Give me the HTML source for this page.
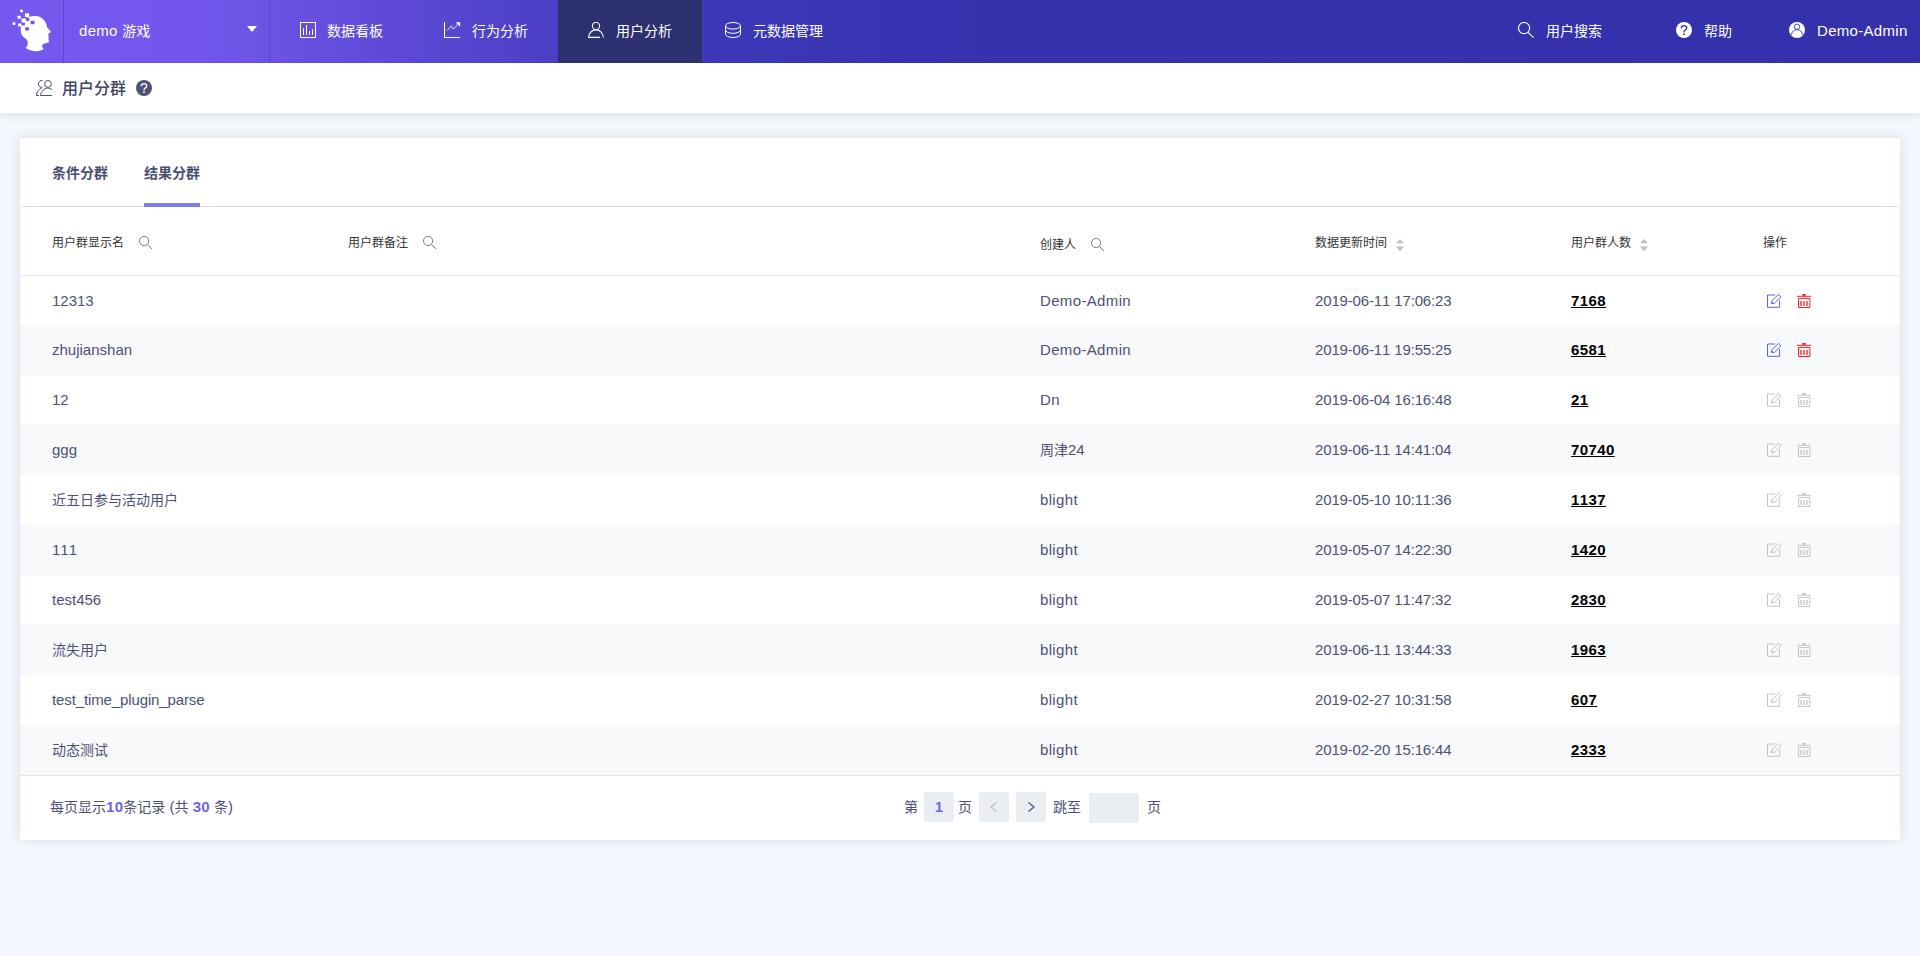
<!DOCTYPE html>
<html lang="zh-CN">
<head>
<meta charset="utf-8">
<title>用户分群</title>
<style>
*{box-sizing:border-box;margin:0;padding:0}
html,body{width:1920px;height:956px;overflow:hidden}
body{background:#f5f7fe;font-family:"Liberation Sans","Noto Sans CJK SC",sans-serif;font-size:14px;color:#42546d;position:relative}
.abs{position:absolute}
/* ---------- top nav ---------- */
#nav{z-index:2;position:absolute;left:0;top:0;width:1920px;height:63px;box-shadow:inset 0 -1px 0 rgba(30,0,160,.07);background:linear-gradient(90deg,#7558ee 0px,#7357ec 200px,#5d49d6 400px,#4a3fc4 560px,#3c37b6 720px,#3632ae 1000px,#3531ad 1920px)}
#nav .sep{position:absolute;top:0;width:1px;height:63px;background:#4d55c2}
#nav .item{position:absolute;top:0;height:62px;line-height:62px;color:#fff;font-size:14px;white-space:nowrap}
#nav .item.l{font-size:15px}
#nav svg{position:absolute}
#nav .active{position:absolute;left:558px;top:0;width:144px;height:63px;background:#2d3170}
/* ---------- sub header ---------- */
#sub{position:absolute;left:0;top:63px;width:1920px;height:50px;background:#fff;box-shadow:0 1px 12px rgba(0,0,30,.11)}
#sub .title{position:absolute;left:62px;top:0;height:50px;line-height:51px;font-size:16px;font-weight:500;color:#3f4468}
/* ---------- card ---------- */
#card{position:absolute;left:20px;top:138px;width:1880px;height:702px;background:#fff;box-shadow:0 0 12px rgba(0,0,30,.11)}
.tab{position:absolute;top:23px;height:24px;line-height:24px;font-size:14px;font-weight:bold;color:#4a4f73}
#tabline{position:absolute;left:2px;top:68px;width:1876px;height:1px;background:#dcdcdc}
#tabink{position:absolute;left:124px;top:65px;width:56px;height:4px;background:#7b7bf0}
.th{position:absolute;top:95px;height:20px;line-height:20px;font-size:12px;color:#333;white-space:nowrap}
svg.si{position:absolute;fill:none;stroke:#7c7c7c;stroke-width:1}
svg.so{position:absolute;fill:#c0c0c0}
#hline{position:absolute;left:0;top:137px;width:1880px;height:1px;background:#e6e6e6}
.row{position:absolute;left:0;width:1880px;height:50px;line-height:50px;color:#4d5177;font-size:14px;white-space:nowrap}
.row.odd{background:#f8f9fb}
.row span{position:absolute;top:0}
.row.first span{top:1px}
.row.first svg{top:19px}
.l{font-size:15px;font-style:normal}
i.l{font-style:normal}
.c1{left:32px}.c3{left:1020px}.c4{left:1295px}
.row span{font-kerning:none}
.c3.l{letter-spacing:.35px}
.c4{letter-spacing:-.15px}
.c5{left:1551px;letter-spacing:.4px;font-weight:bold;color:#000;text-decoration:underline}
#fline{position:absolute;left:0;top:637px;width:1880px;height:1px;background:#e4e4e4}
#foot{position:absolute;left:0;top:638px;width:1880px;height:64px;font-size:14px;color:#4d5177}
#foot>span{position:absolute;white-space:nowrap}
.pbox{position:absolute;background:#eaedf1;border-radius:2px}
b.hl{color:#6a66e8}
b.hl.l{letter-spacing:.3px}
.row svg{position:absolute;top:18px;width:14px;height:14px;fill:none;stroke-width:1;overflow:visible}
.row svg.ie{left:1747px}.row svg.id{left:1777px}
svg.ie.on{stroke:#5b62f0}svg.ie.on .k{fill:#5b62f0}svg.id.on{stroke:#f81d22}svg.id.on .k{fill:#f81d22}
svg.off{stroke:#c4c4c4}svg.off .k{fill:#c4c4c4}
svg.id .b{stroke-width:1.3}
.row svg .k{stroke:none}

</style>
</head>
<body>
<div id="nav">
  <div class="active"></div>
  <div class="sep" style="left:63px"></div>
  <div class="sep" style="left:269px"></div>

  <svg style="left:8px;top:4px" width="60" height="54" viewBox="0 0 1062 956"><path fill="#fff" d="M230 400C240 330 300 250 380 225C440 205 520 208 560 225C620 250 665 310 680 360C686 385 688 400 692 412L760 490C762 500 750 512 716 516C714 530 722 545 714 556C722 566 722 580 714 592C722 604 716 620 724 650C728 668 722 680 700 686C670 694 630 700 612 718C596 736 606 770 630 800C600 822 540 836 480 836C410 834 350 805 310 775C340 750 352 720 350 680C346 640 320 615 270 580C240 555 226 500 225 450Z"/><g fill="#fff"><rect x="215" y="100" width="50" height="46" rx="6"/><rect x="300" y="165" width="75" height="66" rx="6"/><rect x="170" y="210" width="55" height="52" rx="6"/><rect x="238" y="255" width="72" height="66" rx="6"/><rect x="80" y="325" width="50" height="46" rx="6"/><rect x="178" y="345" width="58" height="52" rx="6"/></g><g fill="#7155ec"><rect x="320" y="250" width="56" height="50" rx="5"/><rect x="400" y="296" width="70" height="64" rx="5"/><rect x="245" y="330" width="56" height="50" rx="5"/><rect x="305" y="410" width="66" height="60" rx="5"/></g></svg>
  <svg style="left:247px;top:26px" width="10" height="6" viewBox="0 0 10 6"><path fill="#fff" d="M0 0H10L5 6Z"/></svg>
  <svg style="left:300px;top:22px" width="16" height="16" viewBox="0 0 16 16" fill="none" stroke="#fff" stroke-width="1"><rect x="0.5" y="0.5" width="15" height="15"/><path d="M3.5 6V13M6.5 3V13M9.5 9V13M12.5 7V13"/></svg>
  <svg style="left:444px;top:22px" width="17" height="17" viewBox="0 0 17 17" fill="none" stroke="#fff" stroke-width="1"><path d="M0.5 0V15.5H16" stroke-width="1.1"/><path d="M3.2 8.5L7.4 3.8L9.4 7.2L14 2.2" opacity=".85"/><path d="M11.8 0.3H16.1V4.8Z" fill="#fff" stroke="none"/></svg>
  <svg style="left:588px;top:22px" width="16" height="16" viewBox="0 0 16 16" fill="none" stroke="#fff" stroke-width="1.1"><circle cx="8" cy="3.9" r="3.6"/><path d="M12 15.4H0.6C0.8 11 4 7.9 8 7.9C12 7.9 15.2 11 15.4 15.6"/></svg>
  <svg style="left:725px;top:22px" width="16" height="16" viewBox="0 0 16 16" fill="none" stroke="#fff" stroke-width="1"><ellipse cx="8" cy="3.8" rx="7.5" ry="3.3"/><path d="M0.5 3.8V12.2A7.5 3.3 0 0 0 15.5 12.2V3.8M0.5 8A7.5 3.3 0 0 0 15.5 8"/></svg>
  <svg style="left:1518px;top:22px" width="16" height="16" viewBox="0 0 16 16" fill="none" stroke="#fff" stroke-width="1.1"><circle cx="6.1" cy="6.1" r="5.6"/><path d="M10.1 10.3L15.6 15.6"/></svg>
  <svg style="left:1676px;top:22px" width="16" height="16" viewBox="0 0 16 16"><circle cx="8" cy="8" r="8" fill="#fff"/><path d="M5.3 6.2C5.3 4.6 6.5 3.6 8 3.6C9.5 3.6 10.7 4.5 10.7 5.9C10.7 7.8 8 7.9 8 10.2" fill="none" stroke="#3733ae" stroke-width="1.4"/><rect x="7.2" y="11.3" width="1.6" height="1.7" fill="#3733ae"/></svg>
  <svg style="left:1789px;top:22px" width="16" height="16" viewBox="0 0 16 16"><circle cx="8" cy="8" r="8" fill="#fff"/><circle cx="8" cy="4.7" r="2.7" fill="none" stroke="#3733ae" stroke-width="0.9"/><path d="M2.4 12.8C3 9.6 5.2 7.6 8 7.6C10.8 7.6 13 9.6 13.6 12.8" fill="none" stroke="#3733ae" stroke-width="0.9"/></svg>
  <div class="item" style="left:79px"><i class="l" style="letter-spacing:.3px">demo </i>游戏</div>
  <div class="item" style="left:327px">数据看板</div>
  <div class="item" style="left:472px">行为分析</div>
  <div class="item" style="left:616px">用户分析</div>
  <div class="item" style="left:753px">元数据管理</div>
  <div class="item" style="left:1546px">用户搜索</div>
  <div class="item" style="left:1704px">帮助</div>
  <div class="item l" style="left:1817px;letter-spacing:.3px">Demo-Admin</div>
</div>
<div id="sub">
  <svg style="position:absolute;left:36px;top:17px" width="16" height="16" viewBox="0 0 16 16" fill="none" stroke="#4a4f73" stroke-width="1"><circle cx="12" cy="3.9" r="3.4"/><path d="M15.8 15.5H4.5C5 11.5 8 8.2 11.6 8.1C13.3 8.1 14.8 8.7 15.9 9.8"/><path d="M6.6 0.6C4.4 0 2.4 1.6 2.4 3.9C2.4 6 4.2 7.6 6.4 7.3"/><path d="M3 15.5H0.3C0.8 11.6 3 9 5.6 8.2"/></svg>
  <div class="title">用户分群</div>
  <svg style="position:absolute;left:136px;top:17px" width="16" height="16" viewBox="0 0 16 16"><circle cx="8" cy="8" r="8" fill="#4f5278"/><path d="M5.3 6.2C5.3 4.6 6.5 3.6 8 3.6C9.5 3.6 10.7 4.5 10.7 5.9C10.7 7.8 8 7.9 8 10.2" fill="none" stroke="#fff" stroke-width="1.4"/><rect x="7.2" y="11.3" width="1.6" height="1.7" fill="#fff"/></svg>
</div>
<div id="card">
  <div class="tab" style="left:32px">条件分群</div>
  <div class="tab" style="left:124px">结果分群</div>
  <div id="tabline"></div><div id="tabink"></div>
  <div class="th" style="left:32px">用户群显示名</div>
  <svg class="si" style="left:119px;top:98px" width="14" height="14" viewBox="0 0 14 14"><circle cx="5.1" cy="5" r="4.6"/><path d="M8.4 8.5L13 12.9"/></svg>
  <div class="th" style="left:328px">用户群备注</div>
  <svg class="si" style="left:403px;top:98px" width="14" height="14" viewBox="0 0 14 14"><circle cx="5.1" cy="5" r="4.6"/><path d="M8.4 8.5L13 12.9"/></svg>
  <div class="th" style="left:1020px;top:97px">创建人</div>
  <svg class="si" style="left:1071px;top:100px" width="14" height="14" viewBox="0 0 14 14"><circle cx="5.1" cy="5" r="4.6"/><path d="M8.4 8.5L13 12.9"/></svg>
  <div class="th" style="left:1295px">数据更新时间</div>
  <svg class="so" style="left:1376px;top:100.6px" width="8" height="13" viewBox="0 0 8 13"><path d="M0 4.2H8L4 0Z M0 7.6H8L4 12.2Z"/></svg>
  <div class="th" style="left:1551px">用户群人数</div>
  <svg class="so" style="left:1620px;top:100.6px" width="8" height="13" viewBox="0 0 8 13"><path d="M0 4.2H8L4 0Z M0 7.6H8L4 12.2Z"/></svg>
  <div class="th" style="left:1743px">操作</div>
  <div id="hline"></div>
  <div id="rows">
<div class="row first" style="top:137px"><span class="c1 l">12313</span><span class="c3 l">Demo-Admin</span><span class="c4 l">2019-06-11 17:06:23</span><span class="c5 l">7168</span><svg class="ie on" viewBox="0 0 14 14"><path d="M8 1H0.5V13.3H12.6V6.2"/><path d="M11.6 0.3L13.9 2.9L7.2 9.5L4.4 9.3L5 6.7Z"/><path class="k" d="M4.2 9.5L4.9 7.4L6.6 9.4Z"/></svg><svg class="id on" viewBox="0 0 14 14"><path d="M0 2.3H14M1.5 4.4H12.9V13.5H1.5Z"/><path class="k" d="M5.3 0H8.7V1.8H5.3Z"/><path class="b" d="M4 6.9V11.9M7 6.9V11.9M10 6.9V11.9"/></svg></div>
<div class="row odd" style="top:187px"><span class="c1 l">zhujianshan</span><span class="c3 l">Demo-Admin</span><span class="c4 l">2019-06-11 19:55:25</span><span class="c5 l">6581</span><svg class="ie on" viewBox="0 0 14 14"><path d="M8 1H0.5V13.3H12.6V6.2"/><path d="M11.6 0.3L13.9 2.9L7.2 9.5L4.4 9.3L5 6.7Z"/><path class="k" d="M4.2 9.5L4.9 7.4L6.6 9.4Z"/></svg><svg class="id on" viewBox="0 0 14 14"><path d="M0 2.3H14M1.5 4.4H12.9V13.5H1.5Z"/><path class="k" d="M5.3 0H8.7V1.8H5.3Z"/><path class="b" d="M4 6.9V11.9M7 6.9V11.9M10 6.9V11.9"/></svg></div>
<div class="row" style="top:237px"><span class="c1 l">12</span><span class="c3 l">Dn</span><span class="c4 l">2019-06-04 16:16:48</span><span class="c5 l">21</span><svg class="ie off" viewBox="0 0 14 14"><path d="M8 1H0.5V13.3H12.6V6.2"/><path d="M11.6 0.3L13.9 2.9L7.2 9.5L4.4 9.3L5 6.7Z"/><path class="k" d="M4.2 9.5L4.9 7.4L6.6 9.4Z"/></svg><svg class="id off" viewBox="0 0 14 14"><path d="M0 2.3H14M1.5 4.4H12.9V13.5H1.5Z"/><path class="k" d="M5.3 0H8.7V1.8H5.3Z"/><path class="b" d="M4 6.9V11.9M7 6.9V11.9M10 6.9V11.9"/></svg></div>
<div class="row odd" style="top:287px"><span class="c1 l">ggg</span><span class="c3">周津<i class="l">24</i></span><span class="c4 l">2019-06-11 14:41:04</span><span class="c5 l">70740</span><svg class="ie off" viewBox="0 0 14 14"><path d="M8 1H0.5V13.3H12.6V6.2"/><path d="M11.6 0.3L13.9 2.9L7.2 9.5L4.4 9.3L5 6.7Z"/><path class="k" d="M4.2 9.5L4.9 7.4L6.6 9.4Z"/></svg><svg class="id off" viewBox="0 0 14 14"><path d="M0 2.3H14M1.5 4.4H12.9V13.5H1.5Z"/><path class="k" d="M5.3 0H8.7V1.8H5.3Z"/><path class="b" d="M4 6.9V11.9M7 6.9V11.9M10 6.9V11.9"/></svg></div>
<div class="row" style="top:337px"><span class="c1">近五日参与活动用户</span><span class="c3 l">blight</span><span class="c4 l">2019-05-10 10:11:36</span><span class="c5 l">1137</span><svg class="ie off" viewBox="0 0 14 14"><path d="M8 1H0.5V13.3H12.6V6.2"/><path d="M11.6 0.3L13.9 2.9L7.2 9.5L4.4 9.3L5 6.7Z"/><path class="k" d="M4.2 9.5L4.9 7.4L6.6 9.4Z"/></svg><svg class="id off" viewBox="0 0 14 14"><path d="M0 2.3H14M1.5 4.4H12.9V13.5H1.5Z"/><path class="k" d="M5.3 0H8.7V1.8H5.3Z"/><path class="b" d="M4 6.9V11.9M7 6.9V11.9M10 6.9V11.9"/></svg></div>
<div class="row odd" style="top:387px"><span class="c1 l">111</span><span class="c3 l">blight</span><span class="c4 l">2019-05-07 14:22:30</span><span class="c5 l">1420</span><svg class="ie off" viewBox="0 0 14 14"><path d="M8 1H0.5V13.3H12.6V6.2"/><path d="M11.6 0.3L13.9 2.9L7.2 9.5L4.4 9.3L5 6.7Z"/><path class="k" d="M4.2 9.5L4.9 7.4L6.6 9.4Z"/></svg><svg class="id off" viewBox="0 0 14 14"><path d="M0 2.3H14M1.5 4.4H12.9V13.5H1.5Z"/><path class="k" d="M5.3 0H8.7V1.8H5.3Z"/><path class="b" d="M4 6.9V11.9M7 6.9V11.9M10 6.9V11.9"/></svg></div>
<div class="row" style="top:437px"><span class="c1 l">test456</span><span class="c3 l">blight</span><span class="c4 l">2019-05-07 11:47:32</span><span class="c5 l">2830</span><svg class="ie off" viewBox="0 0 14 14"><path d="M8 1H0.5V13.3H12.6V6.2"/><path d="M11.6 0.3L13.9 2.9L7.2 9.5L4.4 9.3L5 6.7Z"/><path class="k" d="M4.2 9.5L4.9 7.4L6.6 9.4Z"/></svg><svg class="id off" viewBox="0 0 14 14"><path d="M0 2.3H14M1.5 4.4H12.9V13.5H1.5Z"/><path class="k" d="M5.3 0H8.7V1.8H5.3Z"/><path class="b" d="M4 6.9V11.9M7 6.9V11.9M10 6.9V11.9"/></svg></div>
<div class="row odd" style="top:487px"><span class="c1">流失用户</span><span class="c3 l">blight</span><span class="c4 l">2019-06-11 13:44:33</span><span class="c5 l">1963</span><svg class="ie off" viewBox="0 0 14 14"><path d="M8 1H0.5V13.3H12.6V6.2"/><path d="M11.6 0.3L13.9 2.9L7.2 9.5L4.4 9.3L5 6.7Z"/><path class="k" d="M4.2 9.5L4.9 7.4L6.6 9.4Z"/></svg><svg class="id off" viewBox="0 0 14 14"><path d="M0 2.3H14M1.5 4.4H12.9V13.5H1.5Z"/><path class="k" d="M5.3 0H8.7V1.8H5.3Z"/><path class="b" d="M4 6.9V11.9M7 6.9V11.9M10 6.9V11.9"/></svg></div>
<div class="row" style="top:537px"><span class="c1 l" style="letter-spacing:-.12px">test_time_plugin_parse</span><span class="c3 l">blight</span><span class="c4 l">2019-02-27 10:31:58</span><span class="c5 l">607</span><svg class="ie off" viewBox="0 0 14 14"><path d="M8 1H0.5V13.3H12.6V6.2"/><path d="M11.6 0.3L13.9 2.9L7.2 9.5L4.4 9.3L5 6.7Z"/><path class="k" d="M4.2 9.5L4.9 7.4L6.6 9.4Z"/></svg><svg class="id off" viewBox="0 0 14 14"><path d="M0 2.3H14M1.5 4.4H12.9V13.5H1.5Z"/><path class="k" d="M5.3 0H8.7V1.8H5.3Z"/><path class="b" d="M4 6.9V11.9M7 6.9V11.9M10 6.9V11.9"/></svg></div>
<div class="row odd" style="top:587px"><span class="c1">动态测试</span><span class="c3 l">blight</span><span class="c4 l">2019-02-20 15:16:44</span><span class="c5 l">2333</span><svg class="ie off" viewBox="0 0 14 14"><path d="M8 1H0.5V13.3H12.6V6.2"/><path d="M11.6 0.3L13.9 2.9L7.2 9.5L4.4 9.3L5 6.7Z"/><path class="k" d="M4.2 9.5L4.9 7.4L6.6 9.4Z"/></svg><svg class="id off" viewBox="0 0 14 14"><path d="M0 2.3H14M1.5 4.4H12.9V13.5H1.5Z"/><path class="k" d="M5.3 0H8.7V1.8H5.3Z"/><path class="b" d="M4 6.9V11.9M7 6.9V11.9M10 6.9V11.9"/></svg></div>
</div>
  <div id="fline"></div>
  <div id="foot">
    <span style="left:30px;top:21px;line-height:20px">每页显示<b class="hl l">10</b>条记录<i class="l"> (</i>共<i class="l"> </i><b class="hl l">30</b><i class="l"> </i>条<i class="l">)</i></span>
    <span style="left:884px;top:21px;line-height:20px">第</span>
    <div class="pbox" style="left:904px;top:16px;width:30px;height:30px;line-height:30px;text-align:center"><b class="hl l">1</b></div>
    <span style="left:938px;top:21px;line-height:20px">页</span>
    <div class="pbox" style="left:959px;top:16px;width:30px;height:30px"><svg width="30" height="30" viewBox="0 0 30 30"><path d="M17.5 10.5L12 15L17.5 19.5" fill="none" stroke="#bfbfbf" stroke-width="1.2"/></svg></div>
    <div class="pbox" style="left:996px;top:16px;width:30px;height:30px"><svg width="30" height="30" viewBox="0 0 30 30"><path d="M12.5 10.5L18 15L12.5 19.5" fill="none" stroke="#4d5177" stroke-width="1.2"/></svg></div>
    <span style="left:1033px;top:21px;line-height:20px">跳至</span>
    <div class="pbox" style="left:1069px;top:17px;width:50px;height:30px"></div>
    <span style="left:1127px;top:21px;line-height:20px">页</span>
  </div>
</div>
</body>
</html>
